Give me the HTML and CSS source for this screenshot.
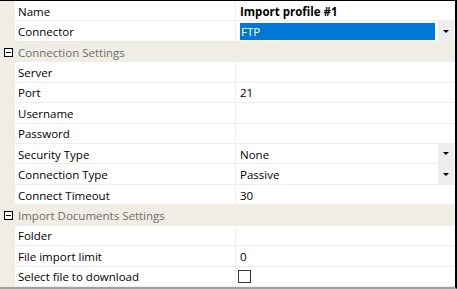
FILE: index.html
```html
<!DOCTYPE html>
<html lang="en">

<head>
    <meta charset="UTF-8">
    <meta name="viewport" content="width=device-width, initial-scale=1.0">
    <title>Import profile</title>

    <link rel="stylesheet" href="styles.css">
</head>

<body>
    <div class="grid">
        <div class="row">
            <div class="margin"></div>
            <div class="label">Name</div>
            <div class="value bold">Import profile #1</div>
        </div>
        <div class="row">
            <div class="margin"></div>
            <div class="label">Connector</div>
            <div class="value">
                <span class="selected">FTP</span>
                <span class="drop"><span class="arrow"></span></span>
            </div>
        </div>
        <div class="row section">
            <div class="margin"><span class="toggle"></span></div>
            <div class="section-title">Connection Settings</div>
        </div>
        <div class="row">
            <div class="margin"></div>
            <div class="label">Server</div>
            <div class="value"></div>
        </div>
        <div class="row">
            <div class="margin"></div>
            <div class="label">Port</div>
            <div class="value">21</div>
        </div>
        <div class="row">
            <div class="margin"></div>
            <div class="label">Username</div>
            <div class="value"></div>
        </div>
        <div class="row">
            <div class="margin"></div>
            <div class="label">Password</div>
            <div class="value"></div>
        </div>
        <div class="row">
            <div class="margin"></div>
            <div class="label">Security Type</div>
            <div class="value">
                <span class="text">None</span>
                <span class="drop"><span class="arrow"></span></span>
            </div>
        </div>
        <div class="row">
            <div class="margin"></div>
            <div class="label">Connection Type</div>
            <div class="value">
                <span class="text">Passive</span>
                <span class="drop"><span class="arrow"></span></span>
            </div>
        </div>
        <div class="row">
            <div class="margin"></div>
            <div class="label">Connect Timeout</div>
            <div class="value">30</div>
        </div>
        <div class="row section">
            <div class="margin"><span class="toggle"></span></div>
            <div class="section-title">Import Documents Settings</div>
        </div>
        <div class="row">
            <div class="margin"></div>
            <div class="label">Folder</div>
            <div class="value"></div>
        </div>
        <div class="row">
            <div class="margin"></div>
            <div class="label">File import limit</div>
            <div class="value">0</div>
        </div>
        <div class="row">
            <div class="margin"></div>
            <div class="label">Select file to download</div>
            <div class="value"><span class="checkbox"></span></div>
        </div>
    </div>
</body>

</html>
```

FILE: styles.css
```css
* {
    box-sizing: border-box;
    margin: 0;
    padding: 0;
}

body {
    width: 457px;
    height: 289px;
    overflow: hidden;
    background-color: #ffffff;
    font-family: "Open Sans", "Noto Sans", sans-serif;
    font-size: 11.5px;
    color: #000000;
}

.grid {
    display: grid;
    grid-template-rows: repeat(14, 1fr);
    height: 289px;
    border-top: 1px solid #000000;
    border-right: 2px solid #000000;
    border-bottom: 2px solid #a0a0a0;
}

.row {
    display: grid;
    grid-template-columns: 15px 220px 1fr;
    align-items: stretch;
}

.margin {
    background-color: #f0ede4;
    display: flex;
    align-items: center;
    justify-content: center;
}

.label,
.value {
    display: flex;
    align-items: center;
    border-bottom: 1px solid #f0ede4;
    white-space: nowrap;
    padding-top: 1px;
}

.label {
    padding-left: 3px;
}

.value {
    border-left: 1px solid #f0ede4;
    padding-left: 4px;
    padding-right: 1px;
}

.bold {
    font-weight: 700;
}

.text {
    flex: 1;
}

.selected {
    flex: 1;
    align-self: stretch;
    margin: 1px 3px 1px 0;
    padding-left: 1px;
    background-color: #0078d7;
    color: #ffffff;
    display: flex;
    align-items: center;
}

.drop {
    width: 16px;
    align-self: stretch;
    margin-top: -1px;
    background-color: #ededed;
    display: flex;
    align-items: center;
    justify-content: center;
}

.arrow {
    width: 0;
    height: 0;
    border-left: 3px solid transparent;
    border-right: 3px solid transparent;
    border-top: 3px solid #000000;
}

.section {
    background-color: #f0ede4;
    grid-template-columns: 15px 1fr;
}

.section-title {
    display: flex;
    align-items: center;
    padding-left: 3px;
    padding-top: 1px;
    color: #6d6d6d;
}

.toggle {
    position: relative;
    width: 9px;
    height: 9px;
    border: 1px solid #000000;
    background-color: #ffffff;
    margin-left: 1px;
}

.toggle::after {
    content: "";
    position: absolute;
    left: 1px;
    right: 1px;
    top: 3px;
    height: 1px;
    background-color: #000000;
}

.checkbox {
    width: 13px;
    height: 13px;
    border: 1px solid #333333;
    background-color: #ffffff;
    margin-left: -2px;
}
```
